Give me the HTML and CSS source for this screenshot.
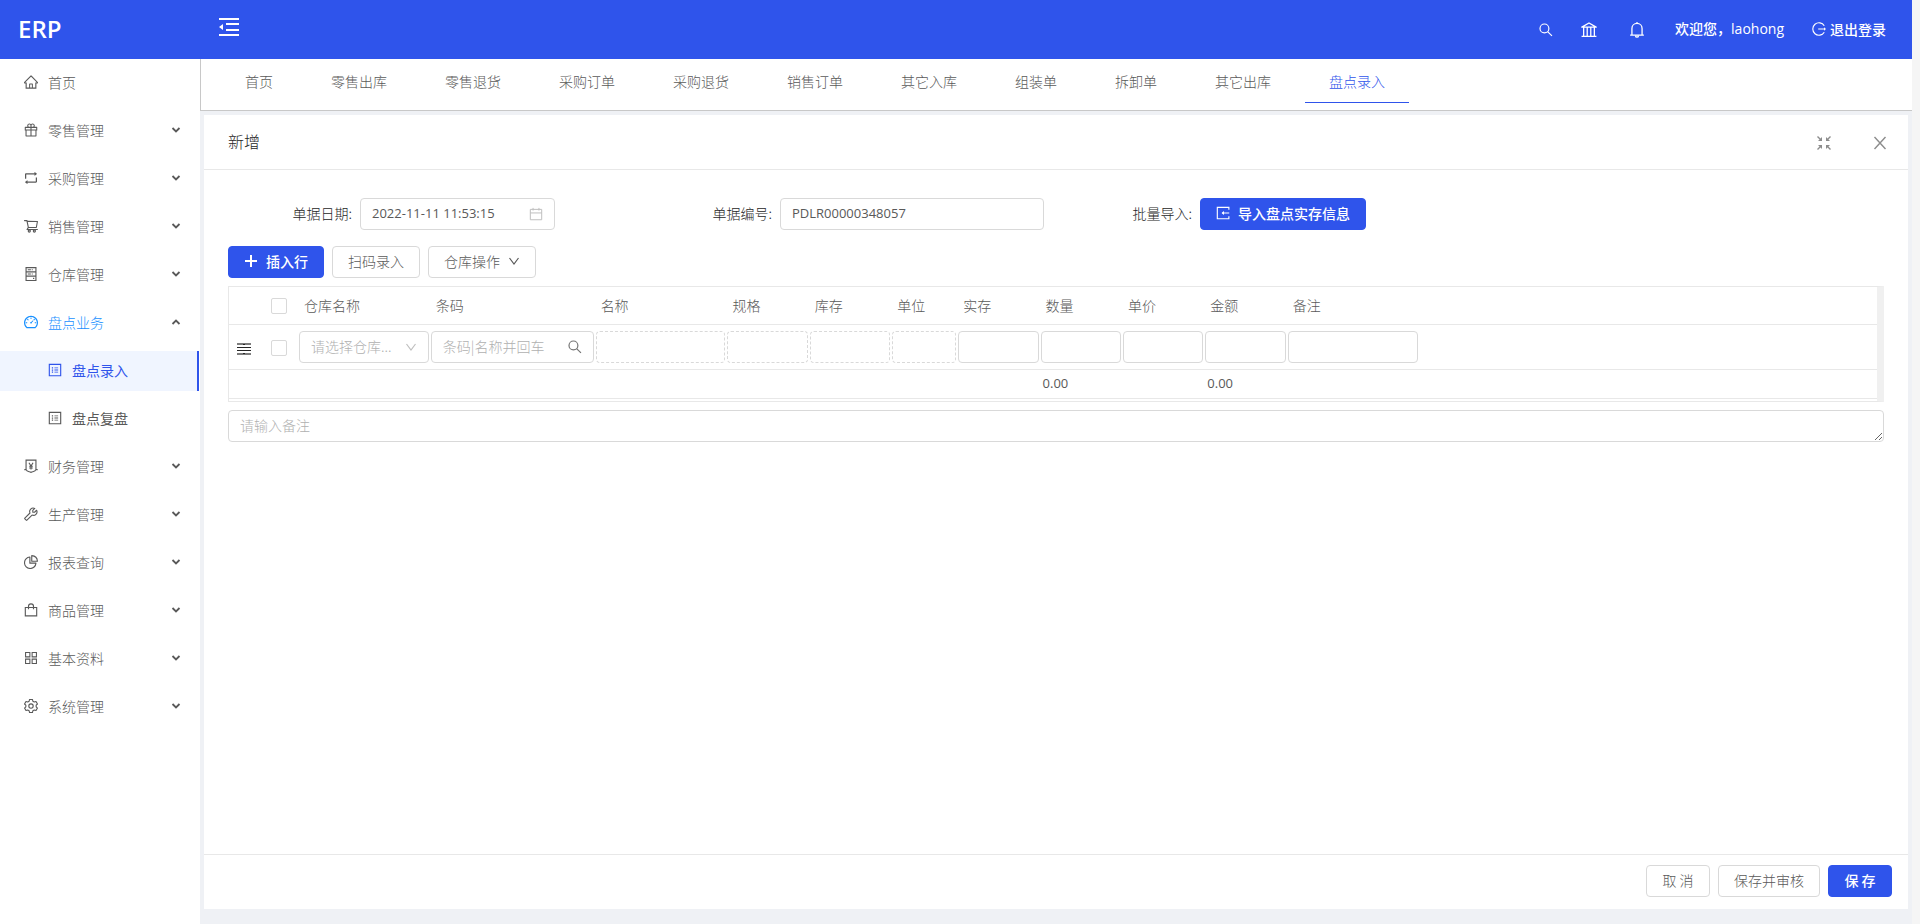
FILE: index.html
```html
<!DOCTYPE html>
<html lang="zh-CN">
<head>
<meta charset="utf-8">
<title>ERP</title>
<link rel="stylesheet" href="styles.css">
</head>
<body>
<svg class="sprite" aria-hidden="true">
  <symbol id="i-home" viewBox="64 64 896 896"><path d="M946.5 505L560.1 118.8l-25.9-25.9a31.5 31.5 0 0 0-44.4 0L77.5 505a63.9 63.9 0 0 0-18.8 46c.4 35.2 29.7 63.3 64.9 63.3h42.5V940h691.8V614.3h43.4c17.1 0 33.2-6.7 45.3-18.8a63.6 63.6 0 0 0 18.7-45.3c0-17-6.7-33.1-18.8-45.2zM568 868H456V664h112v204zm217.9-325.7V868H632V640c0-22.1-17.9-40-40-40H432c-22.1 0-40 17.9-40 40v228H238.1V542.3h-96l370-369.7 23.1 23.1L882 542.3h-96.1z"/></symbol>
  <symbol id="i-gift" viewBox="64 64 896 896"><path d="M880 310H732.4c13.6-21.4 21.6-46.8 21.6-74 0-76.1-61.9-138-138-138-41.4 0-78.7 18.4-104 47.4-25.3-29-62.6-47.4-104-47.4-76.1 0-138 61.9-138 138 0 27.2 7.9 52.6 21.6 74H144c-17.7 0-32 14.3-32 32v200c0 4.4 3.6 8 8 8h40v344c0 17.7 14.3 32 32 32h640c17.7 0 32-14.3 32-32V550h40c4.4 0 8-3.6 8-8V342c0-17.7-14.3-32-32-32zm-334-74c0-38.6 31.4-70 70-70s70 31.4 70 70-31.4 70-70 70h-70v-70zm-138-70c38.6 0 70 31.4 70 70v70h-70c-38.6 0-70-31.4-70-70s31.4-70 70-70zM180 482V378h298v104H180zm48 68h250v308H228V550zm568 308H546V550h250v308zm48-376H546V378h298v104z"/></symbol>
  <symbol id="i-retweet" viewBox="64 64 896 896"><path d="M136 552h63.6c4.4 0 8-3.6 8-8V288.7h528.6v72.6c0 1.9.6 3.7 1.8 5.2a8.3 8.3 0 0 0 11.7 1.4L893 255.4c4.3-5 3.6-10.3 0-13.2L749.7 129.8a8.22 8.22 0 0 0-5.2-1.8c-4.6 0-8.4 3.8-8.4 8.4V209H199.7c-39.5 0-71.7 32.2-71.7 71.8V544c0 4.4 3.6 8 8 8zm752-80h-63.6c-4.4 0-8 3.6-8 8v255.3H287.8v-72.6c0-1.9-.6-3.7-1.8-5.2a8.3 8.3 0 0 0-11.7-1.4L131 768.6c-4.3 5-3.6 10.3 0 13.2l143.3 112.4c1.5 1.2 3.3 1.8 5.2 1.8 4.6 0 8.4-3.8 8.4-8.4V815h536.6c39.5 0 71.7-32.2 71.7-71.8V480c-.2-4.4-3.8-8-8.2-8z"/></symbol>
  <symbol id="i-cart" viewBox="64 64 896 896"><path fill-rule="evenodd" d="M922.9 701.9H327.4l29.9-60.9 496.8-.9c16.8 0 31.2-12 34.2-28.6l68.8-385.1c1.8-10.1-.9-20.5-7.5-28.4a34.99 34.99 0 0 0-26.6-12.5l-632-2.1-5.4-25.4c-3.4-16.2-18-28-34.6-28H96.5a35.3 35.3 0 1 0 0 70.6h125.9L246 312.8l58.1 281.3-74.8 122.1a34.96 34.96 0 0 0-3 36.8c6 11.9 18.1 19.4 31.5 19.4h62.8a102.43 102.43 0 0 0-20.6 61.7c0 56.6 46 102.6 102.6 102.6s102.6-46 102.6-102.6c0-22.3-7.4-44-20.6-61.7h161.1a102.43 102.43 0 0 0-20.6 61.7c0 56.6 46 102.6 102.6 102.6s102.6-46 102.6-102.6c0-22.3-7.4-44-20.6-61.7H923c19.4 0 35.3-15.8 35.3-35.3a35.42 35.42 0 0 0-35.4-35.2zM305.7 253l575.8 1.9-56.4 315.8-452.3.8L305.7 253zm96.9 612.7a31.6 31.6 0 1 1 0-63.2 31.6 31.6 0 0 1 0 63.2zm325.1 0a31.6 31.6 0 1 1 0-63.2 31.6 31.6 0 0 1 0 63.2z"/></symbol>
  <symbol id="i-store" viewBox="64 64 896 896"><path fill="none" stroke="currentColor" stroke-width="72" d="M196 100h632v824H196zM196 376h632M196 648h632"/><path d="M304 208h200v64H304zM304 480h200v64H304zM560 208h64v64h-64zM560 480h64v64h-64zM640 752h80v72h-80z"/></symbol>
  <symbol id="i-dashboard" viewBox="64 64 896 896"><path fill-rule="evenodd" d="M924.8 385.6a446.7 446.7 0 0 0-96-142.4 446.7 446.7 0 0 0-142.4-96C631.1 123.8 572.5 112 512 112s-119.1 11.8-174.4 35.2a446.7 446.7 0 0 0-142.4 96 446.7 446.7 0 0 0-96 142.4C75.8 440.9 64 499.5 64 560c0 132.7 58.3 257.7 159.9 343.1l1.7 1.4c5.8 4.8 13.1 7.5 20.6 7.5h531.7c7.5 0 14.8-2.7 20.6-7.5l1.7-1.4C901.7 817.7 960 692.7 960 560c0-60.5-11.9-119.1-35.2-174.4zM761.4 836H262.6A371.12 371.12 0 0 1 140 560c0-99.4 38.7-192.8 109-263 70.3-70.3 163.7-109 263-109 99.4 0 192.8 38.7 263 109 70.3 70.3 109 163.7 109 263 0 105.6-44.5 205.5-122.6 276zM623.5 421.5a8.03 8.03 0 0 0-11.3 0L527.7 506c-18.7-5-39.4-.2-54.1 14.5a55.95 55.95 0 0 0 0 79.2 55.95 55.95 0 0 0 79.2 0 55.87 55.87 0 0 0 14.5-54.1l84.5-84.5c3.1-3.1 3.1-8.2 0-11.3l-28.3-28.3zM490 320h44c4.4 0 8-3.6 8-8v-80c0-4.4-3.6-8-8-8h-44c-4.4 0-8 3.6-8 8v80c0 4.4 3.6 8 8 8zm260 218v44c0 4.4 3.6 8 8 8h80c4.4 0 8-3.6 8-8v-44c0-4.4-3.6-8-8-8h-80c-4.4 0-8 3.6-8 8zm12.7-197.2l-31.1-31.1a8.03 8.03 0 0 0-11.3 0l-56.6 56.6a8.03 8.03 0 0 0 0 11.3l31.1 31.1c3.1 3.1 8.2 3.1 11.3 0l56.6-56.6c3.1-3.1 3.1-8.2 0-11.3zm-458.6-31.1a8.03 8.03 0 0 0-11.3 0l-31.1 31.1a8.03 8.03 0 0 0 0 11.3l56.6 56.6c3.1 3.1 8.2 3.1 11.3 0l31.1-31.1c3.1-3.1 3.1-8.2 0-11.3l-56.6-56.6zM262 530h-80c-4.4 0-8 3.6-8 8v44c0 4.4 3.6 8 8 8h80c4.4 0 8-3.6 8-8v-44c0-4.4-3.6-8-8-8z"/></symbol>
  <symbol id="i-profile" viewBox="64 64 896 896"><path fill="none" stroke="currentColor" stroke-width="72" d="M148 148h728v728H148z"/><path d="M476 346h236v56H476zM476 484h236v56H476zM476 622h236v56H476zM310 334h80v80h-80zM310 472h80v80h-80zM310 610h80v80h-80z"/></symbol>
  <symbol id="i-money" viewBox="64 64 896 896"><path fill="none" stroke="currentColor" stroke-width="72" d="M196 740V132h632v608M84 740h112c40 130 160 120 316 180 156-60 276-50 316-180h112M380 300l132 210 132-210M512 500v240M396 530h232M396 636h232"/></symbol>
  <symbol id="i-tool" viewBox="64 64 896 896"><path fill="none" stroke="currentColor" stroke-width="70" stroke-linejoin="round" d="M870 270L740 400l-112-2-4-114L752 154C660 108 560 132 494 200c-70 72-84 168-48 248L118 776c-14 14-14 30 0 44l88 88c14 14 30 14 44 0l330-330c84 36 180 20 248-48 70-70 88-172 42-260z"/></symbol>
  <symbol id="i-pie" viewBox="64 64 896 896"><path fill="none" stroke="currentColor" stroke-width="72" stroke-linejoin="round" d="M440 196a366 366 0 1 0 388 388H440zM560 104v360h364C912 260 764 116 560 104z"/></symbol>
  <symbol id="i-bag" viewBox="64 64 896 896"><path fill="none" stroke="currentColor" stroke-width="72" d="M148 348h728v536H148zM352 470V270c0-88 60-150 160-150s160 62 160 150v200"/></symbol>
  <symbol id="i-apps" viewBox="64 64 896 896"><path fill="none" stroke="currentColor" stroke-width="68" d="M164 164h276v276H164zM584 164h276v276H584zM164 584h276v276H164zM584 584h276v276H584z"/></symbol>
  <symbol id="i-setting" viewBox="64 64 896 896"><g fill="none" stroke="currentColor" stroke-width="70" stroke-linejoin="round"><path d="M420 94h184l26 112 92 54 112-36 92 160-84 78v104l84 78-92 160-112-36-92 54-26 112H420l-26-112-92-54-112 36-92-160 84-78V462l-84-78 92-160 112 36 92-54z"/><circle cx="512" cy="514" r="140"/></g></symbol>
  <symbol id="i-search" viewBox="64 64 896 896"><g fill="none" stroke="currentColor" stroke-width="76"><circle cx="412" cy="412" r="284"/><path d="M616 616l276 276"/></g></symbol>
  <symbol id="i-bank" viewBox="64 64 896 896"><path fill="none" stroke="currentColor" stroke-width="72" stroke-linejoin="round" d="M512 118L110 352h804zM212 388v450M412 388v450M612 388v450M812 388v450M96 870h832"/></symbol>
  <symbol id="i-bell" viewBox="64 64 896 896"><path fill="none" stroke="currentColor" stroke-width="72" d="M512 64v80M228 800V428c0-156 122-284 284-284s284 128 284 284v372M128 804h768M430 840c10 100 154 100 164 0"/></symbol>
  <symbol id="i-logout" viewBox="64 64 896 896"><path fill="none" stroke="currentColor" stroke-width="74" d="M850 300a398 398 0 1 0 0 424M460 512h400"/><path d="M830 400l134 112-134 112z"/></symbol>
  <symbol id="i-fold" viewBox="0 0 20 18"><path d="M0 0h20v2H0zM7 5h13v2H7zM7 11h13v2H7zM0 16h20v2H0zM0 9l4-3v6z"/></symbol>
  <symbol id="i-shrink" viewBox="0 0 14 14"><path fill="none" stroke="currentColor" stroke-width="1.4" d="M.5.5l4 4M13.500.5l-4 4M.5 13.500l4-4M13.500 13.500l-4-4"/><path d="M5 1v4H1zM9 1v4h4zM5 13V9H1zM9 13V9h4z"/></symbol>
  <symbol id="i-close" viewBox="0 0 14 14"><path fill="none" stroke="currentColor" stroke-width="1.400" d="M1.500 1l11 12M12.500 1l-11 12"/></symbol>
  <symbol id="i-calendar" viewBox="64 64 896 896"><path fill="none" stroke="currentColor" stroke-width="64" d="M148 216h728v664H148zM148 444h728M324 120v170M700 120v170"/></symbol>
  <symbol id="i-import" viewBox="64 64 896 896"><path fill="none" stroke="currentColor" stroke-width="72" d="M888 310V148H148v728h740V714M470 512h440"/><path d="M420 512l154-124v248z"/></symbol>
  <symbol id="i-plus" viewBox="0 0 14 14"><path d="M6 1h2v5h4v0h1v2H8v5H6V8H1V6h5z"/></symbol>
  <symbol id="i-down" viewBox="0 0 12 12"><path fill="none" stroke="currentColor" stroke-width="1.200" d="M1.500 3L6 9l4.500-6"/></symbol>
  <symbol id="i-chevron" viewBox="0 0 10 10"><path fill="none" stroke="currentColor" stroke-width="1.800" d="M1.500 3L5 6.500 8.500 3"/></symbol>
  <symbol id="i-drag" viewBox="0 0 14 14"><path opacity=".6" d="M0 1h14v2H0zM0 11h14v2H0z"/><path d="M0 5h14v1H0zM0 8h14v1H0zM6 2h2v1H6zM6 11h2v1H6z"/></symbol>
</svg>

<header class="topbar">
  <a class="brand" href="#">ERP</a>
  <button class="bare fold" type="button" aria-label="收起菜单"><svg class="icon-fold"><use href="#i-fold"/></svg></button>
  <nav class="topnav" aria-label="用户">
    <button class="bare" type="button" aria-label="搜索"><svg class="icon"><use href="#i-search"/></svg></button>
    <button class="bare bank" type="button" aria-label="官网"><svg class="icon icon-lg"><use href="#i-bank"/></svg></button>
    <button class="bare bell" type="button" aria-label="通知"><svg class="icon icon-lg"><use href="#i-bell"/></svg></button>
    <span class="welcome">欢迎您，<span class="latin">laohong</span></span>
    <a class="logout" href="#"><svg class="icon"><use href="#i-logout"/></svg>退出登录</a>
  </nav>
</header>

<div class="layout">
  <aside class="sidebar">
    <nav class="menu" aria-label="主菜单">
      <a class="item" href="#"><svg class="icon"><use href="#i-home"/></svg>首页</a>
      <a class="item" href="#"><svg class="icon"><use href="#i-gift"/></svg>零售管理<svg class="arrow"><use href="#i-chevron"/></svg></a>
      <a class="item" href="#"><svg class="icon"><use href="#i-retweet"/></svg>采购管理<svg class="arrow"><use href="#i-chevron"/></svg></a>
      <a class="item" href="#"><svg class="icon"><use href="#i-cart"/></svg>销售管理<svg class="arrow"><use href="#i-chevron"/></svg></a>
      <a class="item" href="#"><svg class="icon"><use href="#i-store"/></svg>仓库管理<svg class="arrow"><use href="#i-chevron"/></svg></a>
      <a class="item open" href="#"><svg class="icon"><use href="#i-dashboard"/></svg>盘点业务<svg class="arrow"><use href="#i-chevron"/></svg></a>
      <a class="item sub selected" href="#"><svg class="icon"><use href="#i-profile"/></svg>盘点录入</a>
      <a class="item sub" href="#"><svg class="icon"><use href="#i-profile"/></svg>盘点复盘</a>
      <a class="item" href="#"><svg class="icon"><use href="#i-money"/></svg>财务管理<svg class="arrow"><use href="#i-chevron"/></svg></a>
      <a class="item" href="#"><svg class="icon"><use href="#i-tool"/></svg>生产管理<svg class="arrow"><use href="#i-chevron"/></svg></a>
      <a class="item" href="#"><svg class="icon"><use href="#i-pie"/></svg>报表查询<svg class="arrow"><use href="#i-chevron"/></svg></a>
      <a class="item" href="#"><svg class="icon"><use href="#i-bag"/></svg>商品管理<svg class="arrow"><use href="#i-chevron"/></svg></a>
      <a class="item" href="#"><svg class="icon"><use href="#i-apps"/></svg>基本资料<svg class="arrow"><use href="#i-chevron"/></svg></a>
      <a class="item" href="#"><svg class="icon"><use href="#i-setting"/></svg>系统管理<svg class="arrow"><use href="#i-chevron"/></svg></a>
    </nav>
  </aside>

  <div class="content">
    <nav class="tabs" aria-label="页签">
      <a class="tab" href="#">首页</a>
      <a class="tab" href="#">零售出库</a>
      <a class="tab" href="#">零售退货</a>
      <a class="tab" href="#">采购订单</a>
      <a class="tab" href="#">采购退货</a>
      <a class="tab" href="#">销售订单</a>
      <a class="tab" href="#">其它入库</a>
      <a class="tab" href="#">组装单</a>
      <a class="tab" href="#">拆卸单</a>
      <a class="tab" href="#">其它出库</a>
      <a class="tab active" href="#">盘点录入</a>
    </nav>

    <main class="stage">
      <section class="panel">
        <header class="panel-head">
          <h1 class="title">新增</h1>
          <div class="panel-tools">
            <button class="bare" type="button" aria-label="退出全屏"><svg class="icon"><use href="#i-shrink"/></svg></button>
            <button class="bare" type="button" aria-label="关闭"><svg class="icon"><use href="#i-close"/></svg></button>
          </div>
        </header>

        <form class="panel-body" id="bill">
          <div class="fields">
            <div class="field">
              <label for="date">单据日期:</label>
              <div class="control date">
                <input class="input latin" id="date" type="text" value="2022-11-11 11:53:15">
                <svg class="icon suffix pale"><use href="#i-calendar"/></svg>
              </div>
            </div>
            <div class="field">
              <label for="number">单据编号:</label>
              <div class="control"><input class="input latin" id="number" type="text" value="PDLR00000348057"></div>
            </div>
            <div class="field">
              <label for="import">批量导入:</label>
              <div class="control"><button class="btn primary" id="import" type="button"><svg class="icon"><use href="#i-import"/></svg>导入盘点实存信息</button></div>
            </div>
          </div>

          <div class="actions">
            <button class="btn primary" type="button"><svg class="icon"><use href="#i-plus"/></svg>插入行</button>
            <button class="btn" type="button">扫码录入</button>
            <button class="btn" type="button">仓库操作<svg class="icon-sm"><use href="#i-down"/></svg></button>
          </div>

          <div class="grid">
            <table class="table">
              <colgroup>
                <col class="c-drag"><col class="c-check"><col class="c-8"><col class="c-10"><col class="c-8"><col class="c-5"><col class="c-5"><col class="c-4"><col class="c-5"><col class="c-5"><col class="c-5"><col class="c-5"><col class="c-8"><col>
              </colgroup>
              <thead>
                <tr>
                  <td></td>
                  <td class="center"><input class="check" type="checkbox" aria-label="全选"></td>
                  <th>仓库名称</th><th>条码</th><th>名称</th><th>规格</th><th>库存</th><th>单位</th><th>实存</th><th>数量</th><th>单价</th><th>金额</th><th>备注</th>
                  <td></td>
                </tr>
              </thead>
              <tbody>
                <tr>
                  <td class="center"><svg class="icon drag"><use href="#i-drag"/></svg></td>
                  <td class="center"><input class="check" type="checkbox" aria-label="选择行"></td>
                  <td><div class="control"><select class="input select" aria-label="仓库名称"><option>请选择仓库...</option></select><svg class="icon-sm suffix pale"><use href="#i-down"/></svg></div></td>
                  <td><div class="control"><input class="input" type="text" placeholder="条码|名称并回车" aria-label="条码"><svg class="icon suffix dim"><use href="#i-search"/></svg></div></td>
                  <td><input class="input dashed" type="text" readonly aria-label="名称"></td>
                  <td><input class="input dashed" type="text" readonly aria-label="规格"></td>
                  <td><input class="input dashed" type="text" readonly aria-label="库存"></td>
                  <td><input class="input dashed" type="text" readonly aria-label="单位"></td>
                  <td><input class="input" type="text" aria-label="实存"></td>
                  <td><input class="input" type="text" aria-label="数量"></td>
                  <td><input class="input" type="text" aria-label="单价"></td>
                  <td><input class="input" type="text" aria-label="金额"></td>
                  <td><input class="input" type="text" aria-label="备注"></td>
                  <td></td>
                </tr>
              </tbody>
              <tfoot>
                <tr>
                  <td colspan="9"></td><td class="latin">0.00</td><td></td><td class="latin">0.00</td><td></td><td></td>
                </tr>
              </tfoot>
            </table>
          </div>
          <textarea class="input memo" rows="1" placeholder="请输入备注" aria-label="备注"></textarea>
        </form>

        <footer class="panel-foot">
          <button class="btn" type="button">取 消</button>
          <button class="btn" type="button">保存并审核</button>
          <button class="btn primary" type="submit" form="bill">保 存</button>
        </footer>
      </section>
    </main>
  </div>
</div>
</body>
</html>
```
FILE: styles.css
```css
* { box-sizing: border-box; }

body {
  display: flex;
  flex-direction: column;
  min-height: 100vh;
  margin: 0;
  padding-right: 8px;
  background: #f5f5f5;
  color: #595959;
  font: 300 14px/22px "Noto Sans CJK SC", sans-serif;
}

a { color: inherit; text-decoration: none; }
button, input, select, textarea { font: inherit; color: inherit; }

.sprite { position: absolute; width: 0; height: 0; }
svg { fill: currentColor; flex: none; }
.icon { width: 14px; height: 14px; }
.icon-lg { width: 16px; height: 16px; }
.icon-sm { width: 12px; height: 12px; }
.icon-fold { width: 20px; height: 18px; }
.latin { font-family: "Open Sans", "Noto Sans CJK SC", sans-serif; font-size: 13px; font-weight: 400; }

.bare {
  display: flex;
  padding: 0;
  border: 0;
  background: none;
  cursor: pointer;
}

/* Top bar */
.topbar {
  display: flex;
  align-items: center;
  height: 59px;
  background: #2f54eb;
  color: #fff;
}
.brand {
  width: 200px;
  padding: 0 0 2px 18px;
  font: 600 24px/30px "Open Sans", sans-serif;
}
.fold { margin-left: 19px; padding-bottom: 6px; }
.topnav {
  display: flex;
  align-items: center;
  margin-left: auto;
  padding-right: 26px;
  font-weight: 500;
}
.bank { margin-left: 28px; }
.bell { margin-left: 32px; }
.welcome { margin-left: 30px; padding-bottom: 2px; }
.welcome .latin { font-size: 14px; }
.logout { display: flex; align-items: center; gap: 4px; margin-left: 28px; padding-bottom: 1px; }

/* Frame */
.layout { display: flex; flex: 1; }
.sidebar { flex: none; width: 200px; padding: 4px 1px 4px 0; background: #fff; }
.menu { display: flex; flex-direction: column; gap: 8px; }
.item {
  display: flex;
  align-items: center;
  gap: 10px;
  height: 40px;
  padding: 0 18px 2px 24px;
  color: #595959;
}
.item .icon { color: #595959; }
.arrow { width: 10px; height: 10px; margin-left: auto; color: #595959; }
.item.open, .open .icon { color: #1890ff; }
.open .arrow { transform: rotate(180deg); }
.sub { padding-left: 48px; font-weight: 400; }
.selected { border-right: 2px solid #2f54eb; background: #f0f5ff; }
.item.selected, .selected .icon { color: #2f54eb; }

.content { display: flex; flex: 1; flex-direction: column; min-width: 0; }
.tabs {
  display: flex;
  gap: 10px;
  height: 52px;
  padding-left: 20px;
  border-left: 1px solid #c8c8c8;
  border-bottom: 1px solid #c8c8c8;
  background: #fff;
}
.tab { height: 44px; padding: 11px 24px 0; color: #595959; }
.active { border-bottom: 1px solid #2f54eb; color: #2f54eb; }
.stage { display: flex; flex: 1; padding: 4px 4px 15px; background: #eff1f5; }

/* Panel */
.panel { display: flex; flex: 1; flex-direction: column; min-width: 0; background: #fff; }
.panel-head {
  display: flex;
  align-items: center;
  justify-content: space-between;
  height: 55px;
  padding: 0 21px 0 24px;
  border-bottom: 1px solid #e8e8e8;
}
.title { margin: 0; padding-bottom: 2px; color: #262626; font-size: 16px; font-weight: 300; }
.panel-tools { display: flex; gap: 42px; padding-top: 2px; color: #8c8c8c; }
.panel-body { flex: 1; padding: 28px 24px 24px; }
.panel-foot {
  display: flex;
  justify-content: flex-end;
  gap: 8px;
  padding: 10px 16px 12px;
  border-top: 1px solid #e8e8e8;
}

.fields { display: grid; grid-template-columns: repeat(4, 1fr); gap: 24px; }
.field { display: grid; grid-template-columns: 1fr 2fr; align-items: center; }
.field label { padding: 0 8px 2px 0; color: #262626; text-align: right; white-space: nowrap; }
.control { position: relative; }
.date { width: 195px; }

.input {
  display: block;
  width: 100%;
  height: 32px;
  padding: 3px 11px 5px;
  border: 1px solid #d9d9d9;
  border-radius: 4px;
  background: #fff;
  outline: 0;
}
.input::placeholder { color: #b0b0b0; opacity: 1; }
.dashed { border-style: dashed; }
.select { appearance: none; color: #b0b0b0; }
.suffix { position: absolute; top: 0; right: 12px; bottom: 0; margin: auto 0; pointer-events: none; }
.pale { color: #bfbfbf; }
.dim { color: #737373; }

.btn {
  display: flex;
  align-items: center;
  justify-content: center;
  gap: 8px;
  min-width: 64px;
  height: 32px;
  padding: 0 15px 2px;
  border: 1px solid #d9d9d9;
  border-radius: 4px;
  background: #fff;
  color: #595959;
  cursor: pointer;
}
.primary { border-color: #2f54eb; background: #2f54eb; color: #fff; font-weight: 500; }
.actions { display: flex; gap: 8px; margin: 16px 0 8px; }

/* Line item grid */
.grid {
  padding-bottom: 2px;
  border: 1px solid #e8e8e8;
  border-right: 7px solid #f0f0f0;
}
.table { width: 100%; table-layout: fixed; border-collapse: collapse; }
.c-drag { width: 30px; }
.c-check { width: 39px; }
.c-4 { width: 4%; }
.c-5 { width: 5%; }
.c-8 { width: 8%; }
.c-10 { width: 10%; }
.table th, .table td { padding: 0 1px; border-bottom: 1px solid #e8e8e8; }
.table th { padding-left: 6px; font-weight: 300; text-align: left; }
.table .center { text-align: center; }
.table svg, .check { vertical-align: middle; }
.table thead tr { height: 37px; }
.table tbody tr { height: 45px; }
.table tfoot tr { height: 29px; }
.table tfoot td { padding: 0 0 2px 3px; }
.drag { color: #262626; }
.check {
  appearance: none;
  width: 16px;
  height: 16px;
  margin: 0 0 2px;
  border: 1px solid #d9d9d9;
  border-radius: 2px;
  background: #fff;
}
.memo { min-height: 32px; margin-top: 8px; resize: vertical; }
```
